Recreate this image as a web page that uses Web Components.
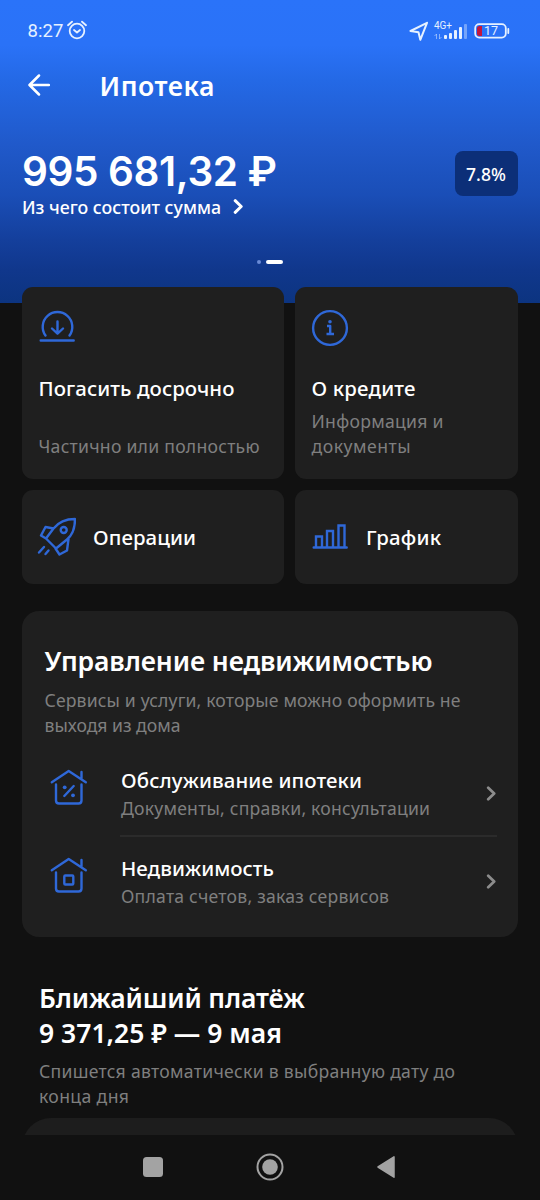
<!DOCTYPE html>
<html lang="ru">
<head>
<meta charset="utf-8">
<title>Ипотека</title>
<style>
html,body{margin:0;background:#111;height:1200px;overflow:hidden}
body{font-family:"Noto Sans","Open Sans",sans-serif;color:#fff}
</style>
</head>
<body>
<mortgage-screen></mortgage-screen>
<script>
const define = (name, html, setup) => {
  const tpl = document.createElement('template');
  tpl.innerHTML = html;
  customElements.define(name, class extends HTMLElement {
    connectedCallback() {
      if (this.shadowRoot) return;
      this.attachShadow({mode: 'open'}).append(tpl.content.cloneNode(true));
      if (setup) setup(this, this.shadowRoot);
    }
  });
};

/* One line of text; "w" is its width, reached by tracking. */
const KINDS = {
  title: [26.5, 32, 600], amount: [40.5, 48, 600], link: [17.8, 24, 500], badge: [17.5, 24, 500],
  item: [20.4, 26, 500], note: [17.6, 25, 400], h2: [26.5, 34, 600], h3: [26.5, 35, 600],
  clock: [18.5, 22, 400], net: [10, 10, 400], level: [12.5, 14, 400]
};
define('ui-text', `<style>
:host{display:block;white-space:pre;padding-left:1px}
:host([kind=note]){color:#7f7f7f}
:host([kind=amount]){font-family:Inter,"Noto Sans",sans-serif}
:host([kind=clock]),:host([kind=net]),:host([kind=level]){font-family:Roboto,sans-serif;color:#e6f1ff}
span{display:inline-block;vertical-align:top}
</style><span><slot></slot></span>`, (el, root) => {
  const [fs, lh, wt] = KINDS[el.getAttribute('kind')];
  Object.assign(el.style, {fontSize: fs + 'px', lineHeight: lh + 'px', height: lh + 'px', fontWeight: wt});
  const w = +el.getAttribute('w'), s = root.querySelector('span');
  if (w) s.style.letterSpacing = ((w - s.getBoundingClientRect().width) / (el.textContent.length - 1)).toFixed(3) + 'px';
});

const ICONS = {
  back: [22, 22, '<path d="M21 11H2M11 1.500 1.500 11l9.500 9.500" stroke-width="2.500"/>'],
  alarm: [20, 20, '<circle cx="10" cy="11" r="7.300" stroke-width="1.800"/><path d="M1 5.200 5 1.700M19 5.200 15 1.700M7 10l3 2.500 3-2.500" stroke-width="1.800"/>'],
  geo: [20, 20, '<path d="M18 1.800 1.500 10l8 1.300 1.800 7.500z" stroke-width="2"/>'],
  battery: [36, 16, '<rect x="1.200" y="1.200" width="30.600" height="13.400" rx="4" stroke-width="1.800"/><path d="M34.300 6v4" stroke-width="1.800"/><path d="M5.500 3H8v10H5.500Q3 13 3 10.500v-5Q3 3 5.500 3z" fill="#c3163c" stroke="none"/>'],
  next: [11, 15, '<path d="m2.200 1.700 6 5.800-6 5.800" stroke-width="3"/>'],
  chev: [11, 15, '<path d="m2.200 1.700 6 5.800-6 5.800" stroke-width="2.700"/>'],
  repay: [40, 40, '<path d="M7.500 27.500A14.800 14.800 0 1 1 31.500 27.500M2.700 32.500h33"/><path d="M19.500 13.500v12M14 20.500l5.500 5.200 5.500-5.200"/>'],
  info: [40, 40, '<circle cx="19" cy="20" r="16.900"/><path d="M16 18h3.200v8.200M15.500 26h7.500" stroke-width="2.400" stroke-linecap="butt"/><circle cx="19" cy="13.800" r="1.800" fill="currentColor" stroke="none"/>'],
  rocket: [40, 40, '<path d="M10 21.500 17.500 11.500Q25 2 39 2 39 16 31 22.500L20 31.500zM17.500 11.500 9.500 10 5 18.500l5 3M32.500 22 31 33.500l-7.500 4-4-6"/><circle cx="27.700" cy="13" r="3"/><path d="M8 30l-5 5.500M12.500 33.500l-3 3.500"/>'],
  chart: [40, 40, '<path d="M2.700 30.500h33M5 30V19.500h6V30M16 30V14h6v16M27.500 30V8.500h6V30" stroke-linejoin="miter"/>'],
  percent: [40, 40, '<path d="M2.800 15.300 19.700 4 36.800 15.300M32.500 5v7M7 17.500v16q0 3 3 3h19.500q3 0 3-3v-16"/><path d="m15.300 29 9.400-10"/><circle cx="15.700" cy="20.300" r="1.900" fill="currentColor" stroke="none"/><circle cx="24" cy="28.300" r="1.900" fill="currentColor" stroke="none"/>'],
  home: [40, 40, '<path d="M2.800 15.300 19.700 4 36.800 15.300M32.500 5v7M7 17.500v16q0 3 3 3h19.500q3 0 3-3v-16"/><rect x="15.300" y="20.500" width="9" height="9" rx="1"/>'],
  recents: [20, 20, '<rect width="20" height="20" rx="3.500" fill="currentColor" stroke="none"/>'],
  circle: [28, 28, '<circle cx="14" cy="14" r="12.500" stroke-width="2"/><circle cx="14" cy="14" r="7.800" fill="currentColor" stroke="none"/>'],
  triangle: [20, 24, '<path d="M18 1.800v20.400L2 12z" fill="currentColor" stroke-width="1.500"/>']
};
define('ui-icon', `<style>:host{display:block;flex:none}svg{display:block}</style><div></div>`, (el, root) => {
  const [w, h, body] = ICONS[el.getAttribute('name')];
  root.querySelector('div').innerHTML = `<svg width="${w}" height="${h}" viewBox="0 0 ${w} ${h}" fill="none" stroke="currentColor" stroke-width="2.400" stroke-linecap="round" stroke-linejoin="round">${body}</svg>`;
});
const icon = name => {
  const el = document.createElement('ui-icon');
  el.setAttribute('name', name);
  return el;
};

define('status-bar', `<style>
:host{display:flex;align-items:center;height:61px;padding:0 30px 0 26.500px;color:#e6f1ff;box-sizing:border-box}
.alarm{margin:-2px 0 0 3px}
.geo{margin-left:auto}
.net{margin:-1px 0 0 4px;width:34px;height:19px;position:relative}
.net ui-text{position:absolute;left:0;top:0}
.net svg{position:absolute;left:0;top:0}
.bat{position:relative;margin-left:7px}
.bat ui-text{position:absolute;left:9px;top:1px}
</style>
<ui-text kind="clock" w="36">8:27</ui-text><ui-icon class="alarm" name="alarm"></ui-icon>
<ui-icon class="geo" name="geo"></ui-icon>
<div class="net"><svg width="36" height="19" fill="#e6f1ff"><rect x="11" y="14" width="3" height="4" rx="1"/><rect x="16" y="12" width="3" height="6" rx="1"/><rect x="21" y="9" width="3" height="9" rx="1"/><rect x="26" y="6" width="3" height="12" rx="1"/><rect x="31" y="3" width="3" height="15" rx="1" opacity=".4"/><path d="M3.500 18v-5l-2 2M6.500 13v5l2-2" fill="none" stroke="#e6f1ff" stroke-opacity=".5"/></svg><ui-text kind="net" w="18">4G+</ui-text></div>
<div class="bat"><ui-icon name="battery"></ui-icon><ui-text kind="level">17</ui-text></div>`);

define('app-bar', `<style>
:host{display:flex;height:50px;box-sizing:border-box;padding:0 0 2px 27.500px;align-items:center;gap:49px}
ui-text{margin-top:2px}
</style><ui-icon name="back"></ui-icon><ui-text kind="title" w="115">Ипотека</ui-text>`);

define('loan-header', `<style>
:host{display:block;height:303px;background:linear-gradient(#2a73f9 0,#2a72f7 45px,#2469e6 80px,#2059ca 145px,#1a4eb7 195px,#143f9c 240px,#10378c 270px,#0c3480 303px)}
.sum{display:flex;justify-content:space-between;align-items:flex-start;padding:36.500px 22px 0 21px}
.more{display:flex;align-items:center;gap:11.500px;margin-top:-1px}
.rate{margin-top:3.500px;width:63px;height:45px;border-radius:8px;background:#0c2f78;display:flex;align-items:center;justify-content:center}
.rate ui-text{padding:0 1px 0 0}
.dots{display:flex;justify-content:center;align-items:center;gap:5px;margin-top:41.500px;height:4px}
.dots i{width:4px;height:4px;border-radius:2px;background:#6a8bd6}
.dots i+i{width:17px;background:#fff}
</style>
<status-bar></status-bar>
<app-bar></app-bar>
<div class="sum"><div><ui-text kind="amount" w="255">995 681,32 ₽</ui-text>
<div class="more"><ui-text kind="link" w="199">Из чего состоит сумма</ui-text><ui-icon name="next"></ui-icon></div></div>
<div class="rate"><ui-text kind="badge" w="40">7.8%</ui-text></div></div>
<div class="dots"><i></i><i></i></div>`);

define('action-card', `<style>
:host{display:flex;flex-direction:column;box-sizing:border-box;background:#1f1f1f;border-radius:11px;padding:21px 15.500px 20px}
:host([row]){flex-direction:row;align-items:center;padding:0 14px;gap:16px}
:host([row][tight]){padding:0 16px;gap:14px}
.i{color:#2f68d8}
:host(:not([row])) .t{margin-top:26.500px}
:host(:not([row])) .n{margin-top:auto}
</style><div class="i"></div><div class="t"><slot></slot></div><div class="n"><slot name="note"></slot></div>`, (el, root) => {
  root.querySelector('.i').append(icon(el.getAttribute('icon')));
  if (el.hasAttribute('row')) root.querySelector('.n').remove();
});

define('service-row', `<style>
:host{display:flex;height:88.200px}
.ic{padding:17.500px 31.500px 0 5px;color:#2f68d8}
.b{flex:1;display:flex;justify-content:space-between;align-items:center;border-bottom:2px solid transparent;box-sizing:border-box}
:host([line]) .b{border-color:#2b2b2b}
.x{display:flex;flex-direction:column;gap:3px;margin-bottom:-3px}
.c{color:#8c8c8c;margin-top:2px}
</style><div class="ic"></div><div class="b"><div class="x"><slot></slot></div><ui-icon class="c" name="chev"></ui-icon></div>`, (el, root) => {
  root.querySelector('.ic').append(icon(el.getAttribute('icon')));
});

define('service-panel', `<style>
:host{display:block;box-sizing:border-box;height:326px;background:#1f1f1f;border-radius:17px;padding:33px 21.500px 0 21.500px}
.s{margin:10px 0 11px}
</style><slot name="head"></slot><div class="s"><slot name="sub"></slot></div><slot></slot>`);

define('payment-block', `<style>
:host{display:block;padding-top:43.500px}
.p{padding-left:16px}.n{margin:8px 0 9.500px}
.sheet{height:16.500px;overflow:hidden}
.sheet div{height:70px;border-radius:29px;background:#1d1d1d}
</style><div class="p"><slot></slot><div class="n"><slot name="note"></slot></div></div><div class="sheet"><div></div></div>`);

define('nav-bar', `<style>
:host{display:flex;align-items:center;height:65.500px;box-sizing:border-box;padding-left:143px;background:#111;color:#a3a3a3}
.o{margin-left:92.500px}.t{margin-left:92px}
</style><ui-icon name="recents"></ui-icon><ui-icon class="o" name="circle"></ui-icon><ui-icon class="t" name="triangle"></ui-icon>`);

define('mortgage-screen', `<style>
:host{display:block;width:540px;height:1200px;overflow:hidden;background:#111}
main{padding:0 22px;margin-top:-16px;position:relative}
.grid{display:grid;grid-template:191.500px 94px/262px 223px;gap:11px;margin-bottom:27.500px}
</style>
<loan-header></loan-header>
<main>
<div class="grid">
<action-card icon="repay"><ui-text kind="item" w="196">Погасить досрочно</ui-text><ui-text slot="note" kind="note" w="221">Частично или полностью</ui-text></action-card>
<action-card icon="info"><ui-text kind="item" w="104">О кредите</ui-text><ui-text slot="note" kind="note" w="132">Информация и</ui-text><ui-text slot="note" kind="note" w="99">документы</ui-text></action-card>
<action-card row icon="rocket"><ui-text kind="item" w="103">Операции</ui-text></action-card>
<action-card row tight icon="chart"><ui-text kind="item" w="75">График</ui-text></action-card>
</div>
<service-panel>
<ui-text slot="head" kind="h2" w="388">Управление недвижимостью</ui-text>
<ui-text slot="sub" kind="note" w="416">Сервисы и услуги, которые можно оформить не</ui-text><ui-text slot="sub" kind="note" w="136">выходя из дома</ui-text>
<service-row line icon="percent"><ui-text kind="item" w="241">Обслуживание ипотеки</ui-text><ui-text kind="note" w="309">Документы, справки, консультации</ui-text></service-row>
<service-row icon="home"><ui-text kind="item" w="153">Недвижимость</ui-text><ui-text kind="note" w="268">Оплата счетов, заказ сервисов</ui-text></service-row>
</service-panel>
<payment-block>
<ui-text kind="h3" w="266">Ближайший платёж</ui-text><ui-text kind="h3" w="243">9 371,25 ₽ — 9 мая</ui-text>
<ui-text slot="note" kind="note" w="416">Спишется автоматически в выбранную дату до</ui-text><ui-text slot="note" kind="note" w="90">конца дня</ui-text>
</payment-block>
</main>
<nav-bar></nav-bar>`);
</script>
</body>
</html>
